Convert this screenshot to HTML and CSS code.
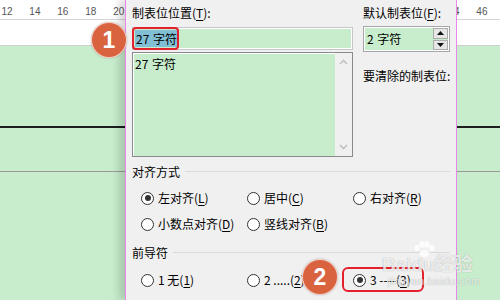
FILE: index.html
```html
<!DOCTYPE html>
<html lang="zh-CN">
<head>
<meta charset="utf-8">
<title>制表位</title>
<link rel="stylesheet" href="styles.css">
</head>
<body>
<div class="doc">
  <div class="ruler">
    <span>12</span><span>14</span><span>16</span><span>18</span><span>20</span><span class="hidden-run"></span><span>44</span><span>46</span>
  </div>
  <div class="topmargin"></div>
  <div class="page">
    <div class="rule-black"></div>
    <div class="rule-grey"></div>
  </div>
</div>

<div class="dialog">
  <div class="top">
    <div class="col">
      <div class="label">制表位位置(<u>T</u>):</div>
      <div class="input">
        <span class="sel">27 字符</span>
        <span class="mark"></span>
      </div>
      <div class="list">
        <div class="items"><div class="item">27 字符</div></div>
        <div class="scroll">
          <svg width="17" height="14" viewBox="0 0 17 14"><polyline points="5,9 8.5,5.5 12,9" fill="none" stroke="#c2c2c2" stroke-width="1.6"/></svg>
          <svg width="17" height="14" viewBox="0 0 17 14"><polyline points="5,5 8.5,8.5 12,5" fill="none" stroke="#c2c2c2" stroke-width="1.6"/></svg>
        </div>
      </div>
    </div>
    <div class="col">
      <div class="label">默认制表位(<u>F</u>):</div>
      <div class="spin">
        <div class="spin-text">2 字符</div>
        <div class="spin-btns">
          <div class="sbtn"><svg width="7" height="4" viewBox="0 0 7 4"><polygon points="0,4 3.5,0 7,4" fill="#111"/></svg></div>
          <div class="sbtn"><svg width="7" height="4" viewBox="0 0 7 4"><polygon points="0,0 7,0 3.5,4" fill="#111"/></svg></div>
        </div>
      </div>
      <div class="label clear">要清除的制表位:</div>
    </div>
  </div>

  <div class="group-head"><span>对齐方式</span><i></i></div>
  <div class="radios">
    <div class="radio"><span class="dot on"></span>左对齐(<u>L</u>)</div>
    <div class="radio"><span class="dot"></span>居中(<u>C</u>)</div>
    <div class="radio"><span class="dot"></span>右对齐(<u>R</u>)</div>
    <div class="radio"><span class="dot"></span>小数点对齐(<u>D</u>)</div>
    <div class="radio"><span class="dot"></span>竖线对齐(<u>B</u>)</div>
  </div>

  <div class="group-head lead"><span>前导符</span><i></i></div>
  <div class="radios">
    <div class="radio"><span class="dot"></span>1 无(<u>1</u>)</div>
    <div class="radio"><span class="dot"></span>2 .....(<u>2</u>)</div>
    <div class="radio"><span class="dot on"></span>3 ----(<u>3</u>)</div>
    <div class="radio"><span class="dot"></span></div>
    <div class="radio"><span class="dot"></span></div>
  </div>
</div>

<div class="ring"></div>
<div class="watermark">
  <div class="wm-logo">Bai<span class="paw-wrap"><svg class="paw" width="24" height="16" viewBox="0 0 24 16"><ellipse cx="5" cy="7" rx="2.6" ry="3.2"/><ellipse cx="10" cy="3.5" rx="2.6" ry="3.2"/><ellipse cx="15" cy="3.5" rx="2.6" ry="3.2"/><ellipse cx="20" cy="7" rx="2.6" ry="3.2"/><ellipse cx="12.5" cy="12.5" rx="5" ry="3.5"/></svg>du</span>经验</div>
  <div class="wm-url">jingyan.baidu.com</div>
</div>
<div class="badge b1">1</div>
<div class="badge b2">2</div>
</body>
</html>
```
FILE: styles.css
```css
* { box-sizing: border-box; }
html, body { margin: 0; padding: 0; }
body {
  width: 500px;
  height: 300px;
  overflow: hidden;
  position: relative;
  background: #c7edcc;
  font-family: "Noto Sans CJK SC", "Noto Sans", sans-serif;
  font-size: 12px;
  color: #000;
}
u { text-decoration: underline; text-underline-offset: 2px; }

/* document behind the dialog */
.doc { width: 500px; height: 300px; display: flex; flex-direction: column; }
.ruler {
  height: 20px;
  background: #fff;
  border-bottom: 1px solid #d6d6d6;
  display: flex;
  margin-left: -7px;
  font-family: "Liberation Sans", sans-serif;
  font-size: 10px;
  color: #555;
  padding-top: 6px;
  line-height: 11px;
}
.ruler span { flex: 0 0 27.94px; text-align: center; }
.ruler span.hidden-run { flex: 0 0 307.3px; }
.topmargin { height: 26px; background: #fff; border-bottom: 1px solid #cfcfcf; }
.page { flex: 1; background: #c7edcc; padding-top: 80px; }
.rule-black { height: 2px; background: #1e1e1e; }
.rule-grey { height: 1px; background: #9a9a9a; margin-top: 43px; }

/* dialog window */
.dialog {
  position: absolute;
  left: 125px;
  top: 0;
  width: 332px;
  height: 300px;
  overflow: hidden;
  background: #f0f0f0;
  border: 1px solid #ea86ea;
  border-top: none;
  border-bottom: none;
  box-shadow: -6px 0 8px rgba(0,0,0,0.16);
  padding: 6px 6px 0 6px;
}
.top { display: grid; grid-template-columns: 221px 87px; column-gap: 10px; }
.col { display: flex; flex-direction: column; }
.label { line-height: 14px; height: 14px; white-space: nowrap; }
.input {
  position: relative;
  margin-top: 7px;
  height: 23px;
  border: 1px solid #c6c6c6;
  background: #c7edcc;
  box-shadow: inset 0 0 0 1px #fff;
  padding: 2px 2px;
  line-height: 17px;
}
.sel { display: inline-block; background: #80bfd4; padding: 0 1px; line-height: 17px; word-spacing: 1px; }
.mark {
  position: absolute;
  left: -1px;
  top: -1px;
  width: 47px;
  height: 23px;
  border: 2px solid #e3202c;
  border-radius: 4px;
}
.list {
  margin-top: 2px;
  height: 105px;
  border: 1px solid #8a8a8e;
  display: flex;
}
.items { flex: 1; background: #c7edcc; padding: 3px 2px; box-shadow: inset 1px 1px 0 #fff; }
.item { line-height: 16px; word-spacing: 1px; }
.scroll {
  width: 17px;
  background: #f0f0f0;
  display: flex;
  flex-direction: column;
  justify-content: space-between;
  padding: 2px 0;
}
.scroll svg { display: block; }

.spin {
  margin-top: 6px;
  height: 26px;
  border: 1px solid #a6a6a6;
  background: #c7edcc;
  display: flex;
  box-shadow: inset 0 0 0 1px #fff;
}
.spin-text { flex: 1; padding: 0 0 0 3px; line-height: 24px; word-spacing: 1px; }
.spin-btns { width: 15px; margin: 1px 1px 1px 0; display: flex; flex-direction: column; gap: 1px; }
.sbtn {
  flex: 1;
  background: #e6e6e6;
  border: 1px solid #acacac;
  display: flex;
  align-items: center;
  justify-content: center;
}
.sbtn svg { display: block; }
.clear { margin-top: 17px; }

.group-head {
  display: flex;
  align-items: center;
  margin-top: 8px;
  line-height: 14px;
  height: 14px;
}
.group-head i { flex: 1; height: 1px; background: #dadada; margin-left: 5px; margin-top: -2px; }
.group-head.lead { margin-top: 9px; }
.radios {
  display: grid;
  grid-template-columns: 106px 106px 106px;
  grid-auto-rows: 26px;
  padding: 6px 0 0 9px;
}
.lead + .radios { padding-top: 7px; }
.radio { display: flex; align-items: center; white-space: nowrap; line-height: 14px; }
.dot {
  width: 13px;
  height: 13px;
  border: 1px solid #333;
  border-radius: 50%;
  background: #fff;
  margin-right: 4px;
  display: flex;
  align-items: center;
  justify-content: center;
  flex: none;
}
.dot.on::after { content: ""; width: 6px; height: 6px; border-radius: 50%; background: #333; }

/* annotations */
.ring {
  position: absolute;
  left: 342px;
  top: 267px;
  width: 82px;
  height: 25px;
  border: 2px solid #e3202c;
  border-radius: 6px;
}
.badge {
  position: absolute;
  width: 36px;
  height: 36px;
  border-radius: 50%;
  background: #d9623f;
  border: 1px solid rgba(255,255,255,0.7);
  box-shadow: 0 0 2px rgba(0,0,0,0.25);
  color: #fff;
  font-family: "Liberation Sans", sans-serif;
  font-weight: bold;
  font-size: 23px;
  line-height: 34px;
  text-align: center;
}
.b1 { left: 91px; top: 22px; }
.b2 { left: 302px; top: 259px; }

.watermark {
  position: absolute;
  left: 382px;
  top: 245px;
  color: rgba(255,255,255,0.8);
  text-shadow: 0 0 1px rgba(0,0,0,0.35);
  font-family: "Liberation Sans", sans-serif;
}
.wm-logo { font-size: 19px; font-weight: bold; line-height: 20px; padding-top: 10px; position: relative; white-space: nowrap; }
.wm-logo { font-family: "Liberation Sans", "Noto Sans CJK SC", sans-serif; }
.paw-wrap { position: relative; }
.paw { position: absolute; left: 0; top: -13px; fill: rgba(255,255,255,0.8); }
.wm-url { font-size: 11px; line-height: 12px; padding-left: 6px; letter-spacing: 0.2px; }
```
